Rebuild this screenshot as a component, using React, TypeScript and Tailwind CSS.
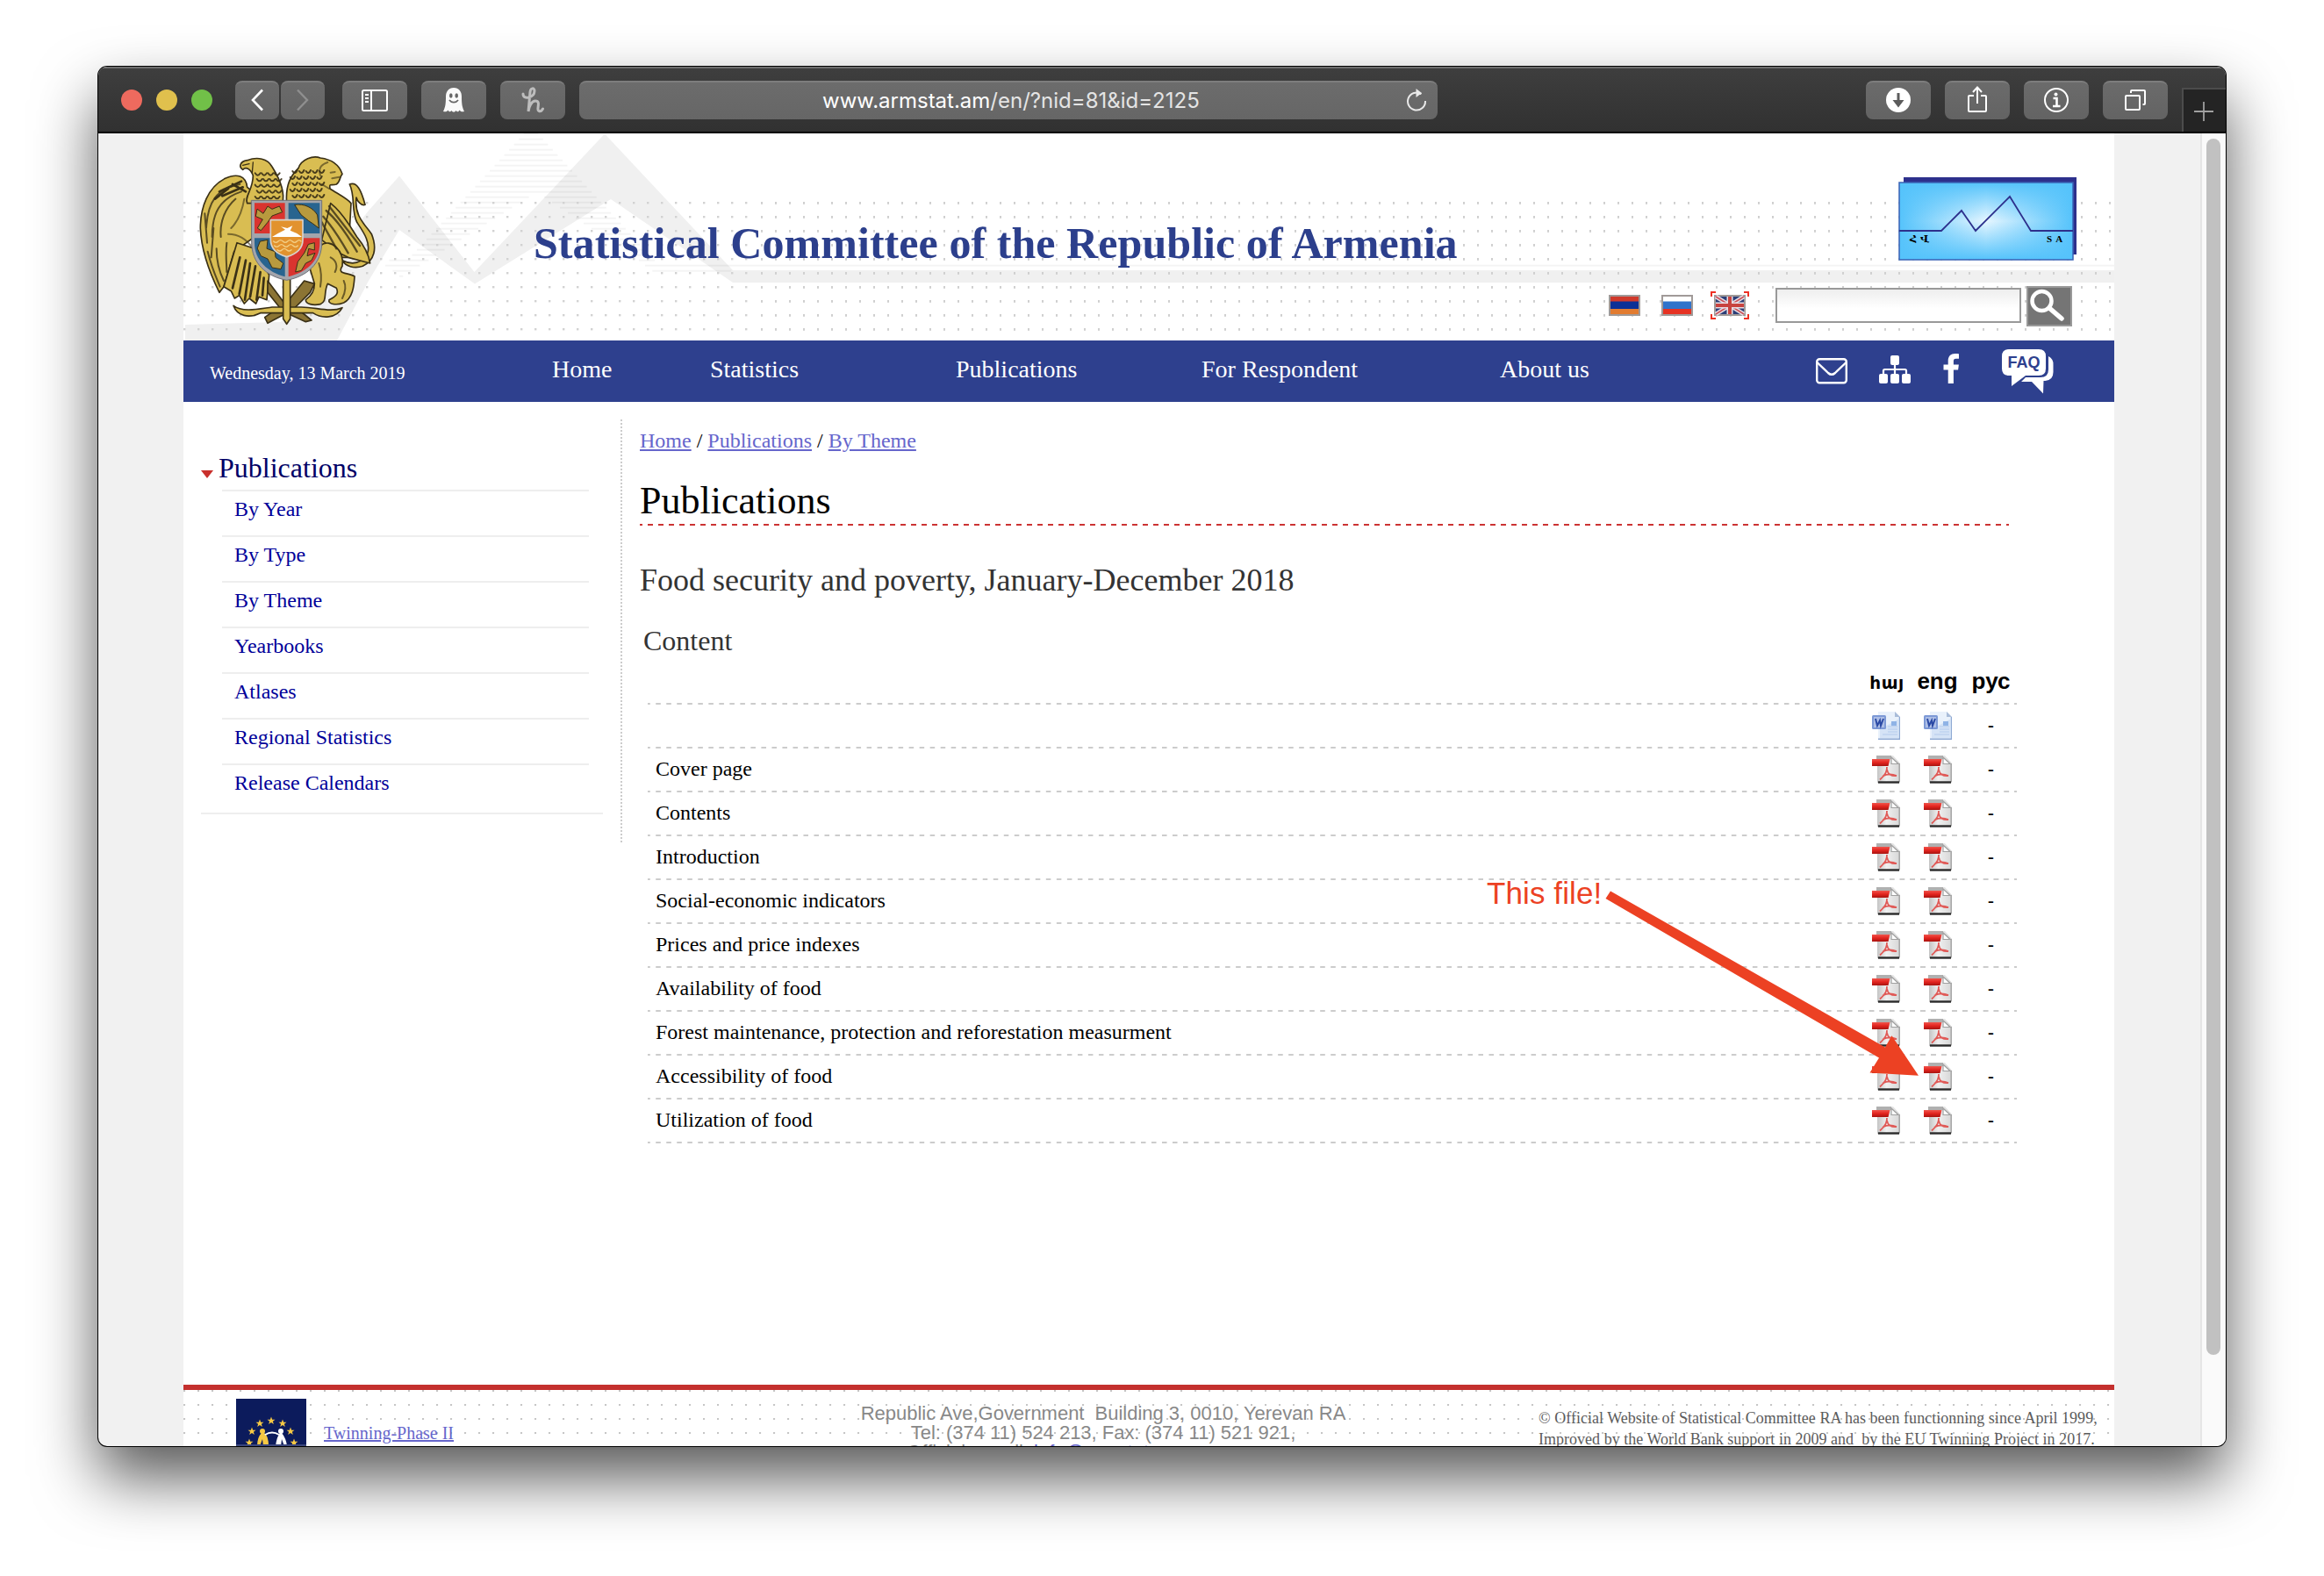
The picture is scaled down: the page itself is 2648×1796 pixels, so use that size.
import React from "react";

const MENU = ["By Year", "By Type", "By Theme", "Yearbooks", "Atlases", "Regional Statistics", "Release Calendars"];

const ROWS = [
  "",
  "Cover page",
  "Contents",
  "Introduction",
  "Social-economic indicators",
  "Prices and price indexes",
  "Availability of food",
  "Forest maintenance, protection and reforestation measurment",
  "Accessibility of food",
  "Utilization of food",
];

/* ---------- Browser chrome ---------- */

function ToolButton({ className, children }: { className: string; children: React.ReactNode }) {
  return (
    <div
      className={`flex h-[44px] items-center justify-center rounded-[8px] border-t-2 border-[#7d7d7d] bg-linear-to-b from-[#6b6b6b] to-[#636363] pb-[2px] ${className}`}
    >
      {children}
    </div>
  );
}

function Toolbar() {
  return (
    <div className="relative flex h-[76px] shrink-0 border-t-2 border-b-2 border-t-[#6d6d6d] border-b-black bg-linear-to-b from-[#3e3e3e] to-[#313131] pt-[14px]">
      <div className="ml-[26px] flex h-[44px] items-center gap-[16px]">
        <span className="size-[24px] rounded-full bg-[#ee6a5e]" />
        <span className="size-[24px] rounded-full bg-[#e0c04d]" />
        <span className="size-[24px] rounded-full bg-[#71c048]" />
      </div>
      <ToolButton className="ml-[26px] w-[50px]">
        <svg width="16" height="26" viewBox="0 0 16 26" fill="none" stroke="#fff" strokeWidth="2.6"><path d="M14 1.5 3 13l11 11.5" /></svg>
      </ToolButton>
      <ToolButton className="ml-[2px] w-[50px]">
        <svg width="16" height="26" viewBox="0 0 16 26" fill="none" stroke="#8f8f8f" strokeWidth="2.4"><path d="M2 1.5 13 13 2 24.5" /></svg>
      </ToolButton>
      <ToolButton className="ml-[20px] w-[74px]">
        <svg width="30" height="25" viewBox="0 0 30 25" fill="none" stroke="#fff" strokeWidth="2">
          <rect x="1" y="1" width="28" height="23" rx="1.5" />
          <path d="M11 1v23M4 6h4M4 10h4M4 14h4" />
        </svg>
      </ToolButton>
      <ToolButton className="ml-[16px] w-[74px]">
        <svg width="26" height="30" viewBox="0 0 26 30" fill="#fafafa">
          <path d="M13 1c6 0 9 4.5 9 10 0 8 .5 12 3 17-3 .6-4 .3-5.500-1.500-.8 2-2.500 2.500-4 .5-1.200 2.200-3.800 2.200-5 0-1.500 2-3.200 1.500-4-.5C5 28.300 4 28.600 1 28c2.500-5 3-9 3-17C4 5.500 7 1 13 1z" />
          <ellipse cx="9.800" cy="10" rx="1.800" ry="2.800" fill="#666" />
          <ellipse cx="16.200" cy="10" rx="1.800" ry="2.800" fill="#666" />
          <path d="M8 15c2.500 3.500 7.500 3.500 10 0" fill="none" stroke="#666" strokeWidth="1.800" />
        </svg>
      </ToolButton>
      <ToolButton className="ml-[16px] w-[74px]">
        <svg width="26" height="30" viewBox="0 0 26 30" fill="none" stroke="#bdbdbd" strokeWidth="3" strokeLinecap="round">
          <path d="M2 8c0 4 3 4.500 6 4 5-1 7-4 7-7.500C15 1 10.500.500 10 6L8 28c.5-5 3.500-12 8-12s3.500 4 3 8 3 5.500 5.500 1" />
        </svg>
      </ToolButton>
      <div className="ml-[16px] flex h-[44px] w-[978px] items-center rounded-[8px] border-t-2 border-[#7d7d7d] bg-linear-to-b from-[#6c6c6c] to-[#666666] pb-[2px]">
        <div className="ml-[277px] mt-[2px] w-[431px] whitespace-nowrap font-['Inter'] text-[24px] leading-[30px] text-[#e4e4e4]">
          <span className="text-white">www.armstat.am</span>/en/?nid=81&amp;id=2125
        </div>
        <svg className="ml-[233px]" width="26" height="30" viewBox="0 0 26 30" fill="none" stroke="#e8e8e8" strokeWidth="2">
          <path d="M18.500 8.200A10 10 0 1 0 23 16" />
          <path d="M12.500 2 19 7l-6.500 5z" fill="#e8e8e8" stroke="none" />
          <path d="M13 7a10 10 0 0 1 5 1" />
        </svg>
      </div>
      <ToolButton className="ml-[488px] w-[74px]">
        <svg width="28" height="28" viewBox="0 0 28 28"><circle cx="14" cy="14" r="14" fill="#fff" /><path d="M12.500 6h3v8h5L14 22.500 7.500 14h5z" fill="#5c5c5c" /></svg>
      </ToolButton>
      <ToolButton className="ml-[16px] w-[74px]">
        <svg className="-mt-[3px]" width="24" height="32" viewBox="0 0 24 32" fill="none" stroke="#fff" strokeWidth="2">
          <path d="M8 12H3a1 1 0 0 0-1 1v16a1 1 0 0 0 1 1h18a1 1 0 0 0 1-1V13a1 1 0 0 0-1-1h-5M12 21V3M7 8l5-5.500L17 8" />
        </svg>
      </ToolButton>
      <ToolButton className="ml-[16px] w-[74px]">
        <svg width="28" height="28" viewBox="0 0 28 28" fill="none" stroke="#fff" strokeWidth="2">
          <circle cx="14" cy="14" r="13" />
          <circle cx="13.500" cy="7.500" r="2" fill="#fff" stroke="none" />
          <path d="M10.500 12h4v8.500M10 21h8.500" strokeWidth="2.600" />
        </svg>
      </ToolButton>
      <ToolButton className="ml-[16px] w-[74px]">
        <svg width="26" height="26" viewBox="0 0 26 26" fill="none" stroke="#fff" strokeWidth="2">
          <rect x="2" y="8" width="16" height="16" rx="1" />
          <path d="M8 5V3a1 1 0 0 1 1-1h14a1 1 0 0 1 1 1v14a1 1 0 0 1-1 1h-1.500" />
        </svg>
      </ToolButton>
      <div className="ml-[16px] mt-[8px] flex h-[50px] w-[50px] items-center justify-center border-t-2 border-l-2 border-[#4c4c4c] bg-[#242424]">
        <svg className="mt-[2px] -ml-[2px]" width="22" height="22" viewBox="0 0 22 22" stroke="#a0a0a0" strokeWidth="1.800"><path d="M11 0v22M0 11h22" /></svg>
      </div>
    </div>
  );
}

/* ---------- Site header ---------- */

const STRIPES: [number, number, number][] = [];
for (let i = 0; i < 28; i++) {
  const y = 8 + i * 18;
  const left = 530 - i * 16.6;
  const right = 580 + i * 16.6;
  if (i < 12) STRIPES.push([y, left, right]);
  else {
    if (i < 24) STRIPES.push([y, left, 548 - (i - 12) * 28.8]);
    if (i < 25) STRIPES.push([y, 600 + (i - 12) * 27, right]);
  }
}
STRIPES.push([440, 70, 205], [458, 57, 175], [476, 82, 145], [494, 105, 118], [458, 945, 6000], [476, 970, 1240]);

function HeaderBackdrop() {
  return (
    <svg className="absolute inset-0" width="2200" height="236" viewBox="209 152 2200 236">
      <defs>
        <pattern id="dotsA" x="217" y="223" width="16" height="16" patternUnits="userSpaceOnUse"><rect x="8" y="7" width="2.400" height="2.400" fill="#d2d2d2" /></pattern>
        <pattern id="dotsB" x="859" y="223" width="16" height="16" patternUnits="userSpaceOnUse"><rect x="8" y="7" width="2" height="2.800" fill="#cfcfcf" /></pattern>
      </defs>
      <path
        d="M211 370L320 367L420 240L455 200.500L540.500 310L689 152.500L835 308H2409V322H835L696 227L541 323.500L455 262L420 320L384 388H211z"
        fill="#f0f0f0"
      />
      <g transform="translate(420 150) scale(.33333)">
        {STRIPES.map(([y, a, b], i) => (
          <rect key={i} x={a} y={y - 3} width={b - a} height="6" fill="#000" opacity=".045" />
        ))}
      </g>
      <rect x="209" y="223" width="652" height="165" fill="url(#dotsA)" />
      <rect x="863" y="223" width="1546" height="165" fill="url(#dotsB)" />
    </svg>
  );
}

function Emblem() {
  const gold = "#d9bd52";
  const dark = "#3a3016";
  return (
    <svg className="relative ml-px mt-[8px] shrink-0" width="240" height="230" viewBox="0 0 720 690" strokeLinejoin="round" strokeLinecap="round">
      <g fill={gold} stroke={dark} strokeWidth="5">
        <path d="M215 160C210 120 180 112 140 130C80 160 55 230 55 300C58 380 90 460 120 520L135 500L170 380L240 330V180z" />
        <path d="M180 350L135 500L160 515L172 540L188 530L205 558L222 540L245 558L255 535L282 545L290 460L240 370z" />
        <path d="M200 100C185 90 190 72 215 68C250 55 285 62 300 90C325 130 345 180 335 215H215C205 190 235 170 235 120C225 95 210 90 200 100z" />
        <path d="M350 215C345 150 365 120 390 95C400 65 440 50 465 60C505 65 530 85 540 115C530 125 535 140 520 150C500 155 495 145 498 165C520 180 560 200 570 215L560 400H450L380 215z" />
        <path d="M565 150C590 140 605 170 618 220C605 225 590 205 588 195C580 260 620 290 640 320C660 370 650 410 610 430C580 440 550 430 540 410C570 425 600 425 625 390C640 350 610 310 590 280C570 240 585 190 565 150z" />
        <path d="M500 215C545 250 570 300 590 330C615 360 630 390 635 420L560 400L520 380L470 340z" />
        <path d="M465 360C500 330 550 380 540 430C520 460 560 450 582 465C580 500 575 540 545 555C520 565 490 560 495 545C515 535 530 525 520 505L490 490C475 520 490 550 465 560C440 565 415 560 415 545C430 535 445 520 445 490L430 440z" />
        <path d="M285 480L345 560L410 480L445 490L430 520L380 570L435 615L415 620L350 590L285 625L275 605L325 570L285 520z" fill="#8b7434" />
        <path d="M168 565C200 590 260 575 300 570H400C450 570 500 590 540 572C520 610 470 610 440 590H260C220 610 180 600 168 565z" />
        <path d="M338 470H362V610L350 628L338 610z" />
      </g>
      <g fill="none" stroke={dark} strokeWidth="6">
        <path d="M75 300C80 210 110 165 190 150M95 330C95 250 120 200 195 175M80 380C95 440 110 470 122 500M110 370C110 420 120 450 135 480M125 330C120 280 140 230 175 200M145 350C140 390 145 420 145 450M100 300L92 400M70 250L78 350" opacity=".8" />
        <path d="M120 175L195 140M130 190L200 160M105 200L150 165M165 150L210 175" strokeWidth="8" />
        <path d="M190 400L165 505M210 410L188 525M225 420L207 545M243 430L225 535M260 450L247 545M272 470L267 530" strokeWidth="8" />
        <path d="M160 300C190 270 200 230 205 200M150 320C190 320 215 340 235 370" opacity=".6" />
        <path d="M485 240C520 270 550 310 590 380M475 260C510 300 540 350 560 385M495 225L600 360M470 280L520 370" strokeWidth="7" opacity=".8" />
        <path d="M500 400C520 410 525 430 515 450M460 420C470 450 470 470 465 500M545 480C555 500 550 520 540 540" opacity=".7" />
        <path d="M465 120C455 90 475 80 490 75M500 110L515 108M505 130L530 125M470 150L495 165" opacity=".6" />
        <path d="M200 85L222 80M235 75L232 110" strokeWidth="4" />
      </g>
      <g fill="none" stroke={dark} strokeWidth="6" opacity=".9">
        {[0, 1, 2, 3, 4].map((r) =>
          [0, 1, 2, 3].map((c) => (
            <path key={`${r}-${c}`} d={`M${242 + c * 22 + (r % 2) * 6} ${112 + r * 20}q9 14 18 0`} />
          ))
        )}
        {[0, 1, 2, 3, 4].map((r) =>
          [0, 1, 2, 3, 4].map((c) => (
            <path key={`m${r}-${c}`} d={`M${370 + c * 23 - (r % 2) * 8} ${105 + r * 21}q9 14 16 -3`} />
          ))
        )}
      </g>
      <path d="M230 205H470V350C470 420 420 465 350 478C280 465 230 420 230 350z" fill="#a3a5ac" stroke="#6f7178" strokeWidth="3" />
      <path d="M240 214H344V318H240z" fill="#d9342f" />
      <path d="M356 214H463V318H356z" fill="#28648f" />
      <path d="M240 334H344V466C285 450 240 410 240 350z" fill="#28648f" />
      <path d="M356 334H463V350C463 415 415 450 356 466z" fill="#d9342f" />
      <g fill="#b89a3e" stroke={dark} strokeWidth="3">
        <path d="M250 235L270 250L285 225L300 235L325 225L335 245L300 258L285 280L262 308L250 300L268 270L245 260z" />
        <path d="M378 220C410 215 440 230 455 255L460 300L440 285L425 275L400 255z" />
        <path d="M260 345L285 340L282 370L310 380L312 400L338 420L330 440L300 435L285 405L262 395L250 370z" />
        <path d="M425 355L445 350V375L425 370L420 395L447 385L435 410L415 420L400 445L380 450L388 415L410 385z" />
      </g>
      <path d="M295 272H405V340C405 370 385 388 350 398C315 388 295 370 295 340z" fill="#e2922e" stroke="#d7d2cc" strokeWidth="5" />
      <path d="M300 330L320 318L345 305L330 295L352 300L370 292L362 308L385 318L402 330z" fill="#fff" />
      <path d="M305 345q8 8 16 0t16 0 16 0 16 0 16 0 14 0M308 360q8 8 16 0t16 0 16 0 16 0 16 0M318 374q8 8 16 0t16 0 16 0" fill="none" stroke="#f3cf86" strokeWidth="4" />
    </svg>
  );
}

function StatLogo() {
  return (
    <svg width="204" height="97" viewBox="0 0 204 97">
      <defs>
        <linearGradient id="lx" x1="0" x2="1"><stop offset="0" stopColor="#55c3fb" /><stop offset=".5" stopColor="#e6f6ff" /><stop offset="1" stopColor="#55c3fb" /></linearGradient>
        <linearGradient id="ly" x1="0" x2="0" y1="0" y2="1"><stop offset="0" stopColor="#55c3fb" /><stop offset=".5" stopColor="#55c3fb" stopOpacity="0" /><stop offset="1" stopColor="#55c3fb" /></linearGradient>
      </defs>
      <rect x="6" y="1" width="197" height="88" fill="#2d308c" />
      <rect x="1" y="7" width="198" height="88" fill="url(#lx)" />
      <rect x="1" y="7" width="198" height="88" fill="url(#ly)" stroke="#3a62b5" strokeWidth="1.500" />
      <path d="M1 62H49L72 39L88 62L127 23L151 62H199" fill="none" stroke="#2d308c" strokeWidth="1.800" />
      <text x="13" y="75" fontSize="11" fontWeight="bold" fontFamily="DejaVu Serif, serif">Հ Վ</text>
      <text x="169" y="75" fontSize="11" fontWeight="bold" letterSpacing="1" fontFamily="Liberation Serif, serif">S A</text>
    </svg>
  );
}

function Flags() {
  return (
    <div className="-mt-[2px] flex items-center">
      <svg width="36" height="24" viewBox="0 0 36 24"><rect width="36" height="24" fill="#a09a98" /><path fill="#d0392b" d="M2 2h32v6H2z" /><path fill="#0c3096" d="M2 7.500h32V16H2z" /><path fill="#e27c30" d="M2 16h32v6H2z" /></svg>
      <svg className="ml-[24px]" width="36" height="24" viewBox="0 0 36 24"><rect width="36" height="24" fill="#a09a98" /><path fill="#fff" d="M2 2h32v6H2z" /><path fill="#2f73cb" d="M2 7.500h32V16H2z" /><path fill="#e63223" d="M2 16h32v6H2z" /></svg>
      <svg className="ml-[20px]" width="44" height="32" viewBox="0 0 44 32">
        <path d="M1 6V1h5M38 1h5v5M43 26v5h-5M6 31H1v-5" fill="none" stroke="#ee3124" strokeWidth="2" />
        <rect x="4" y="4" width="36" height="24" fill="#a09a98" />
        <rect x="6" y="6" width="32" height="20" fill="#2c3f78" />
        <path d="M6 6l32 20M38 6L6 26" stroke="#e8dfe6" strokeWidth="4.500" />
        <path d="M6 6l32 20M38 6L6 26" stroke="#c9525a" strokeWidth="1.500" />
        <path d="M22 6v20M6 16h32" stroke="#e8dfe6" strokeWidth="7" />
        <path d="M22 6v20M6 16h32" stroke="#c8433f" strokeWidth="4" />
      </svg>
    </div>
  );
}

function Header() {
  return (
    <header className="relative flex h-[236px] w-[2200px] overflow-hidden">
      <HeaderBackdrop />
      <Emblem />
      <h1 className="relative ml-[158px] mt-[95px] whitespace-nowrap text-[50px] leading-[60px] font-bold tracking-[0.06px] text-[#2c3f8c]">
        Statistical Committee of the Republic of Armenia
      </h1>
      <div className="relative ml-auto flex flex-col items-end pt-[49px] pr-[48px]">
        <div className="-mr-[6px] h-[97px]"><StatLogo /></div>
        <div className="mt-[28px] flex h-[46px] items-center">
          <Flags />
          <div className="ml-[30px] -mt-[2px] h-[40px] w-[280px] border-2 border-[#999] bg-linear-to-b from-[#eeeeee] to-white to-60%" />
          <div className="ml-[6px] h-[46px] w-[52px] border-2 border-[#999] bg-[#757575]">
            <svg width="48" height="42" viewBox="0 0 48 42" fill="none" stroke="#fff" strokeLinecap="round"><circle cx="15.500" cy="15" r="11" strokeWidth="4.500" /><path d="M24 23l14 12" strokeWidth="5.500" /></svg>
          </div>
        </div>
      </div>
    </header>
  );
}

function NavBar() {
  return (
    <nav className="flex h-[70px] bg-[#2e408e] text-[28px] leading-[66px] whitespace-nowrap text-white">
      <div className="ml-[30px] w-[390px] text-[20px] leading-[74px]">Wednesday, 13 March 2019</div>
      <div className="w-[180px]">Home</div>
      <div className="w-[280px]">Statistics</div>
      <div className="w-[280px]">Publications</div>
      <div className="w-[340px]">For Respondent</div>
      <div className="w-[360px]">About us</div>
      <svg className="mt-[19px] shrink-0" width="36" height="32" viewBox="0 0 36 32" fill="none" stroke="#fff" strokeWidth="2.400">
        <rect x="1.200" y="2.200" width="33.600" height="27" rx="3" />
        <path d="M1.500 6c4 4 9 8.500 12.500 12 2.500 2.300 5.500 2.300 8 0C25.500 14.500 30.500 10 34.500 6" />
      </svg>
      <svg className="ml-[36px] mt-[17px] shrink-0" width="36" height="32" viewBox="0 0 36 32" fill="#fff">
        <rect x="13" y="0" width="10" height="11" rx="2" />
        <rect x="0" y="21" width="10" height="11" rx="2" />
        <rect x="13" y="21" width="10" height="11" rx="2" />
        <rect x="26" y="21" width="10" height="11" rx="2" />
        <path d="M18 10v12M5 22v-4.500q0-1.500 1.500-1.500h23q1.500 0 1.500 1.500V22" fill="none" stroke="#fff" strokeWidth="2.200" />
      </svg>
      <svg className="ml-[37px] mt-[15px] shrink-0" width="19" height="34" viewBox="0 0 19 34" fill="#fff">
        <path d="M18 .300V5.700h-3.200c-2.400 0-2.900 1.200-2.900 3V12.500h6l-.8 6H11.900V34H5.700V18.500H.500v-6h5.200V8.100C5.700 2.900 8.900 0 13.500 0c2.200 0 4 .200 4.500.300z" />
      </svg>
      <svg className="ml-[48px] mt-[9px] shrink-0" width="60" height="52" viewBox="0 0 60 52">
        <path d="M8 1H42q8 0 8 8V23q0 8-8 8H27L11 43V31H8Q0 31 0 23V9Q0 1 8 1z" fill="#fff" />
        <path d="M53 9q6 3 5.500 10v8q0 9-9 10H47.500L47 51.500 34 38H22l5-5H44q9 0 9-9z" fill="#fff" />
        <text x="25" y="22" textAnchor="middle" fontSize="18" fontWeight="bold" fontFamily="Liberation Sans, sans-serif" fill="#2e408e">FAQ</text>
      </svg>
    </nav>
  );
}

/* ---------- Content ---------- */

function Sidebar() {
  return (
    <aside className="w-[498px] shrink-0 pl-[20px] pt-[59px]">
      <div className="flex h-[41px] items-start text-[32px] leading-[32px] text-[#000066]">
        <svg className="mt-[19px] mr-[6px]" width="14" height="9" viewBox="0 0 14 9"><path d="M0 0h14L7 9z" fill="#c9302c" /></svg>
        Publications
      </div>
      <ul className="ml-[24px] w-[418px]">
        {MENU.map((m) => (
          <li key={m} className="h-[52px] border-t-2 border-[#eeeeee] pl-[14px] text-[24px] leading-[40px] text-[#000099]">{m}</li>
        ))}
      </ul>
      <div className="mt-[4px] h-[2px] w-[458px] bg-[#eeeeee]" />
    </aside>
  );
}

const DASH_GREY =
  "bg-[linear-gradient(90deg,#cccccc_0_3px,transparent_3px_9px,#cccccc_9px)] bg-[length:12px_2px] bg-bottom-left [background-repeat:round_no-repeat]";

function WordIcon() {
  return (
    <svg width="32" height="32" viewBox="0 0 32 32">
      <path d="M7 0H26L32 6V31H7z" fill="#e9f1fb" />
      <path d="M7 31.200H31.500V6" fill="none" stroke="#8ea9d3" strokeWidth="1.500" />
      <path d="M9 20L31 8V30H9z" fill="#cfe0f5" opacity=".8" />
      <path d="M26 0V6H32z" fill="#a9bcd9" />
      <path d="M18 20h11M18 23h11M12 26h17M18 17h11" stroke="#b4cbec" />
      <rect x="22" y="11" width="6" height="5" fill="#8fb3e6" />
      <rect x="0" y="4" width="16" height="16" rx="1.500" fill="#7d99d6" />
      <rect x="2" y="6" width="12" height="12" fill="#aebfe6" />
      <path d="M4 8l2 8 3-6 1 6 3-8" fill="none" stroke="#2b4aa5" strokeWidth="2" />
    </svg>
  );
}

function PdfIcon() {
  return (
    <svg width="32" height="32" viewBox="0 0 32 32">
      <defs>
        <linearGradient id="pg" x1="0" x2="1"><stop offset="0" stopColor="#c4c4c4" /><stop offset=".4" stopColor="#f0f0f0" /><stop offset="1" stopColor="#d6d6d6" /></linearGradient>
        <linearGradient id="pr" x1="0" x2="0" y1="0" y2="1"><stop offset="0" stopColor="#f0554d" /><stop offset=".5" stopColor="#e3241f" /><stop offset="1" stopColor="#a81410" /></linearGradient>
      </defs>
      <path d="M6 0H24L32 9V31H6z" fill="url(#pg)" />
      <path d="M5 0H22V4H5z" fill="#b0b0b0" />
      <path d="M31.200 9V30" stroke="#a8a8a8" strokeWidth="1.600" />
      <path d="M22 2V9.500H30z" fill="#fff" stroke="#a0a0a0" strokeWidth="1.200" />
      <path d="M7 30.500H31" stroke="#2a2a2a" strokeWidth="2.400" />
      <path d="M17 13C17 18 16 21 9 27.500M17 16C18 21 22 24 28 23M12 23.500C17 21 22 20.500 28 23" fill="none" stroke="#e05a57" strokeWidth="1.800" />
      <path d="M0 4H20.500L18.500 12H0z" fill="url(#pr)" />
    </svg>
  );
}

function FileTable() {
  return (
    <div className="ml-[9px] w-[1560px]">
      <div className="grid h-[53px] grid-cols-[1383px_58px_60px_59px] grid-rows-[53px] text-center font-['Liberation_Sans'] text-[26px] leading-[52px] font-bold">
        <div className={DASH_GREY} />
        <div className={`pt-[5px] font-['DejaVu_Sans'] text-[20px] leading-[47px] tracking-[0.5px] ${DASH_GREY}`}>հայ</div>
        <div className={`pr-[3px] ${DASH_GREY}`}>eng</div>
        <div className={DASH_GREY}>рус</div>
      </div>
      {ROWS.map((r, i) => (
        <div key={i} className="grid h-[50px] grid-cols-[1383px_58px_60px_59px] grid-rows-[50px] text-[24px] leading-[46px]">
          <div className={`pl-[9px] ${DASH_GREY}`}>{r}</div>
          <div className={`flex justify-center pt-[8px] pr-[3px] ${DASH_GREY}`}>{i === 0 ? <WordIcon /> : <PdfIcon />}</div>
          <div className={`flex justify-center pt-[8px] pr-[3px] ${DASH_GREY}`}>{i === 0 ? <WordIcon /> : <PdfIcon />}</div>
          <div className={`text-center font-['Liberation_Sans'] text-[22px] leading-[47px] ${DASH_GREY}`}>-</div>
        </div>
      ))}
    </div>
  );
}

function Content() {
  return (
    <main className="pl-[20px] pt-[30px] text-black">
      <div className="text-[24px] leading-[28px]">
        <a className="text-[#6666cc] underline">Home</a> / <a className="text-[#6666cc] underline">Publications</a> / <a className="text-[#6666cc] underline">By Theme</a>
      </div>
      <h2 className="mt-[29px] text-[44px] leading-[52px]">Publications</h2>
      <div className="h-[2px] w-[1560px] bg-[repeating-linear-gradient(90deg,#cc3333_0_3px,transparent_3px_9px,#cc3333_9px_12px)]" />
      <h3 className="mt-[42px] text-[36px] leading-[40px] text-[#333]">Food security and poverty, January-December 2018</h3>
      <h4 className="mt-[29px] ml-[4px] text-[32px] leading-[40px] text-[#333]">Content</h4>
      <FileTable />
    </main>
  );
}

function TwinningLogo() {
  const stars: [number, number][] = [[40, 25], [27, 28], [53, 28], [18, 37], [62, 37], [15, 50], [66, 50]];
  return (
    <svg width="80" height="54" viewBox="0 0 80 54">
      <rect width="80" height="54" fill="#0c1b5c" />
      {stars.map(([x, y]) => (
        <path key={`${x}-${y}`} transform={`translate(${x} ${y})`} d="M0-4.500 1.200-1.300H4.500L1.900.8 2.800 4 0 2.100-2.800 4-1.900.8-4.500-1.300H-1.200z" fill="#f6c844" />
      ))}
      <circle cx="30" cy="37" r="3" fill="#f6c844" />
      <path d="M29 39q-5 5-5 15h3l3-8 1 8h6q0-12-5-15z" fill="#f6c844" />
      <circle cx="51" cy="37" r="3" fill="#fff" />
      <path d="M52 39q5 6 6 15h-3l-3-8-1 8h-6q1-10 5-15z" fill="#fff" />
      <path d="M33 41q8-5 16 0" fill="none" stroke="#fff" strokeWidth="2" />
      <rect y="52" width="80" height="2" fill="#3a467c" />
    </svg>
  );
}

function Footer() {
  return (
    <footer className="flex h-[70px] shrink-0 overflow-hidden border-t-[6px] border-[#c4302e]">
      <div className="flex w-full bg-[radial-gradient(circle_at_1px_1px,#c6c6c6_1.300px,transparent_1.600px)] bg-[length:16px_16px] bg-position-[0px_0px]">
        <div className="ml-[60px] mt-[10px] h-[54px] w-[80px] shrink-0"><TwinningLogo /></div>
        <a className="ml-[20px] mt-[37px] w-[300px] shrink-0 text-[20px] leading-[24px] text-[#6666cc] underline">Twinning-Phase II</a>
        <div className="mt-[16px] ml-[212px] w-[752px] shrink-0 text-center font-['Liberation_Sans'] text-[22px] leading-[22px] tracking-[-0.02px] whitespace-pre text-[#888]">
          <div>Republic Ave,Government  Building 3, 0010, Yerevan RA</div>
          <div>Tel: (374 11) 524 213, Fax: (374 11) 521 921,</div>
          <div className="pr-[135px]">Official e-mail: <span className="text-[#6666cc] underline">info@armstat.am</span></div>
        </div>
        <div className="mt-[20px] ml-[120px] text-[18px] leading-[24px] tracking-[0.02px] whitespace-pre text-[#5c5c5c]">
          <div>© Official Website of Statistical Committee RA has been functionning since April 1999,</div>
          <div>Improved by the World Bank support in 2009 and  by the EU Twinning Project in 2017.</div>
        </div>
      </div>
    </footer>
  );
}

function Annotation() {
  return (
    <>
      <div className="absolute top-[922px] left-[1582px] font-['Liberation_Sans'] text-[35px] leading-[40px] tracking-[0.1px] text-[#ec4123]">This file!</div>
      <svg className="absolute top-[930px] left-[1709px]" width="380" height="230" viewBox="1822 1006 380 230">
        <path d="M1836 1015.500L2149 1193.500L2156.500 1180.300L2187 1225.800L2131.500 1222.500L2142 1205.500L1830.500 1024z" fill="#ec4123" />
      </svg>
    </>
  );
}

export default function App() {
  return (
    <div className="h-[1796px] w-[2648px] overflow-hidden bg-white pt-[76px] pl-[112px] font-['Liberation_Serif',serif]">
      <div className="relative flex h-[1572px] w-[2424px] flex-col overflow-hidden rounded-[10px] bg-[#f1f1f1] shadow-[0_0_0_1px_#000,0_36px_70px_rgba(0,0,0,0.66)]">
        <Toolbar />
        <div className="flex min-h-0 flex-1">
          <div className="ml-[97px] flex w-[2200px] flex-col bg-white">
            <Header />
            <NavBar />
            <div className="flex h-[1120px] items-start">
              <Sidebar />
              <div className="mt-[20px] h-[484px] w-[2px] shrink-0 bg-[repeating-linear-gradient(#cccccc_0_2px,transparent_2px_4px)]" />
              <Content />
            </div>
            <Footer />
          </div>
          <div className="ml-auto w-[29px] border-l-2 border-[#e6e6e6] bg-[#fafafa] pt-[6px] pl-[5px]">
            <div className="h-[1386px] w-[16px] rounded-full bg-[#c1c1c1]" />
          </div>
        </div>
        <Annotation />
      </div>
    </div>
  );
}
